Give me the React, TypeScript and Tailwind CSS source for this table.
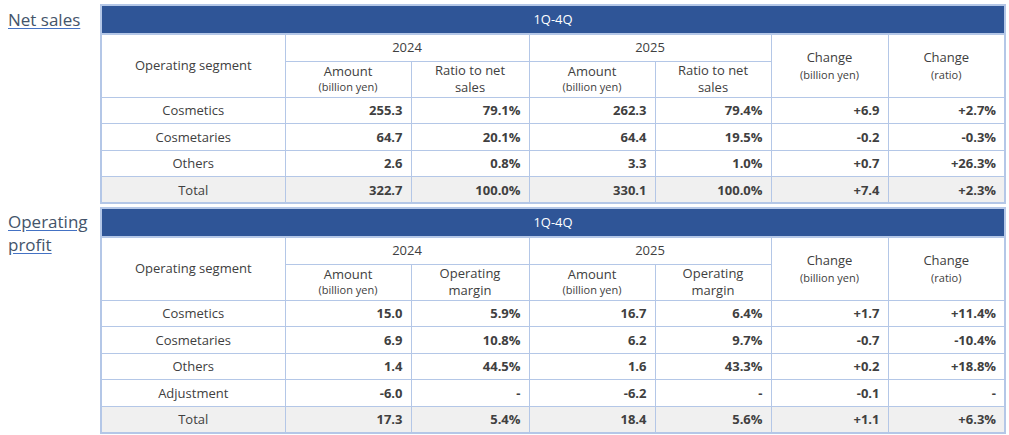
import React from "react";

type Row = { name: string; v: string[]; total?: boolean };

const B = "border border-[#b4c7e7]";

const NET_ROWS: Row[] = [
  { name: "Cosmetics", v: ["255.3", "79.1%", "262.3", "79.4%", "+6.9", "+2.7%"] },
  { name: "Cosmetaries", v: ["64.7", "20.1%", "64.4", "19.5%", "-0.2", "-0.3%"] },
  { name: "Others", v: ["2.6", "0.8%", "3.3", "1.0%", "+0.7", "+26.3%"] },
  { name: "Total", v: ["322.7", "100.0%", "330.1", "100.0%", "+7.4", "+2.3%"], total: true },
];

const OP_ROWS: Row[] = [
  { name: "Cosmetics", v: ["15.0", "5.9%", "16.7", "6.4%", "+1.7", "+11.4%"] },
  { name: "Cosmetaries", v: ["6.9", "10.8%", "6.2", "9.7%", "-0.7", "-10.4%"] },
  { name: "Others", v: ["1.4", "44.5%", "1.6", "43.3%", "+0.2", "+18.8%"] },
  { name: "Adjustment", v: ["-6.0", "-", "-6.2", "-", "-0.1", "-"] },
  { name: "Total", v: ["17.3", "5.4%", "18.4", "5.6%", "+1.1", "+6.3%"], total: true },
];

function SegTable({ ratioLabel, rows }: { ratioLabel: [string, string]; rows: Row[] }) {
  const amount = (
    <th className={`${B} h-[36px] p-0 font-normal leading-[15px]`}>
      <div className="text-[13px]">Amount</div>
      <div className="text-[11px]">(billion yen)</div>
    </th>
  );
  const ratio = (
    <th className={`${B} h-[36px] p-0 font-normal text-[13px] leading-[17px]`}>
      <div>{ratioLabel[0]}</div>
      <div>{ratioLabel[1]}</div>
    </th>
  );
  return (
    <table className="w-[904px] table-fixed border-collapse border-2 border-[#b4c7e7] text-[#404040]">
      <colgroup>
        <col className="w-[184px]" />
        <col className="w-[126px]" />
        <col className="w-[118px]" />
        <col className="w-[126px]" />
        <col className="w-[116px]" />
        <col className="w-[117px]" />
        <col className="w-[117px]" />
      </colgroup>
      <thead>
        <tr>
          <th colSpan={7} className="h-[29px] bg-[#2f5597] p-0 text-[13px] font-normal text-white border-2 border-[#b4c7e7]">
            1Q-4Q
          </th>
        </tr>
        <tr>
          <th rowSpan={2} className={`${B} p-0 text-[13px] font-normal`}>Operating segment</th>
          <th colSpan={2} className={`${B} h-[27px] p-0 text-[13px] font-normal`}>2024</th>
          <th colSpan={2} className={`${B} p-0 text-[13px] font-normal`}>2025</th>
          <th rowSpan={2} className={`${B} p-0 font-normal leading-[17px]`}>
            <div className="text-[13px]">Change</div>
            <div className="text-[11px]">(billion yen)</div>
          </th>
          <th rowSpan={2} className={`${B} p-0 font-normal leading-[17px]`}>
            <div className="text-[13px]">Change</div>
            <div className="text-[11px]">(ratio)</div>
          </th>
        </tr>
        <tr>
          {amount}
          {ratio}
          {amount}
          {ratio}
        </tr>
      </thead>
      <tbody>
        {rows.map((r) => (
          <tr key={r.name} className={r.total ? "bg-[#f0f0f0]" : ""}>
            <td className={`${B} h-[26.5px] p-0 pt-px text-center text-[13px] leading-[17px]`}>{r.name}</td>
            {r.v.map((x, i) => (
              <td key={i} className={`${B} p-0 pt-px pr-[8px] text-right text-[13px] leading-[17px] font-bold`}>
                {x}
              </td>
            ))}
          </tr>
        ))}
      </tbody>
    </table>
  );
}

export default function App() {
  return (
    <div className="w-[1009px] bg-white pt-[4px] font-['Open_Sans',_Arial,_sans-serif]">
      <div className="flex">
        <div className="w-[100px] pl-[8px] pt-[4px]">
          <span className="text-[17px] leading-[22px] text-[#44546a] underline decoration-[#4472c4] underline-offset-2">
            Net sales
          </span>
        </div>
        <SegTable ratioLabel={["Ratio to net", "sales"]} rows={NET_ROWS} />
      </div>
      <div className="mt-[3px] flex">
        <div className="w-[100px] pl-[8px] pt-[3px]">
          <div className="w-[88px] text-[17px] leading-[23px] text-[#44546a] underline decoration-[#4472c4] underline-offset-2">
            Operating profit
          </div>
        </div>
        <SegTable ratioLabel={["Operating", "margin"]} rows={OP_ROWS} />
      </div>
    </div>
  );
}
